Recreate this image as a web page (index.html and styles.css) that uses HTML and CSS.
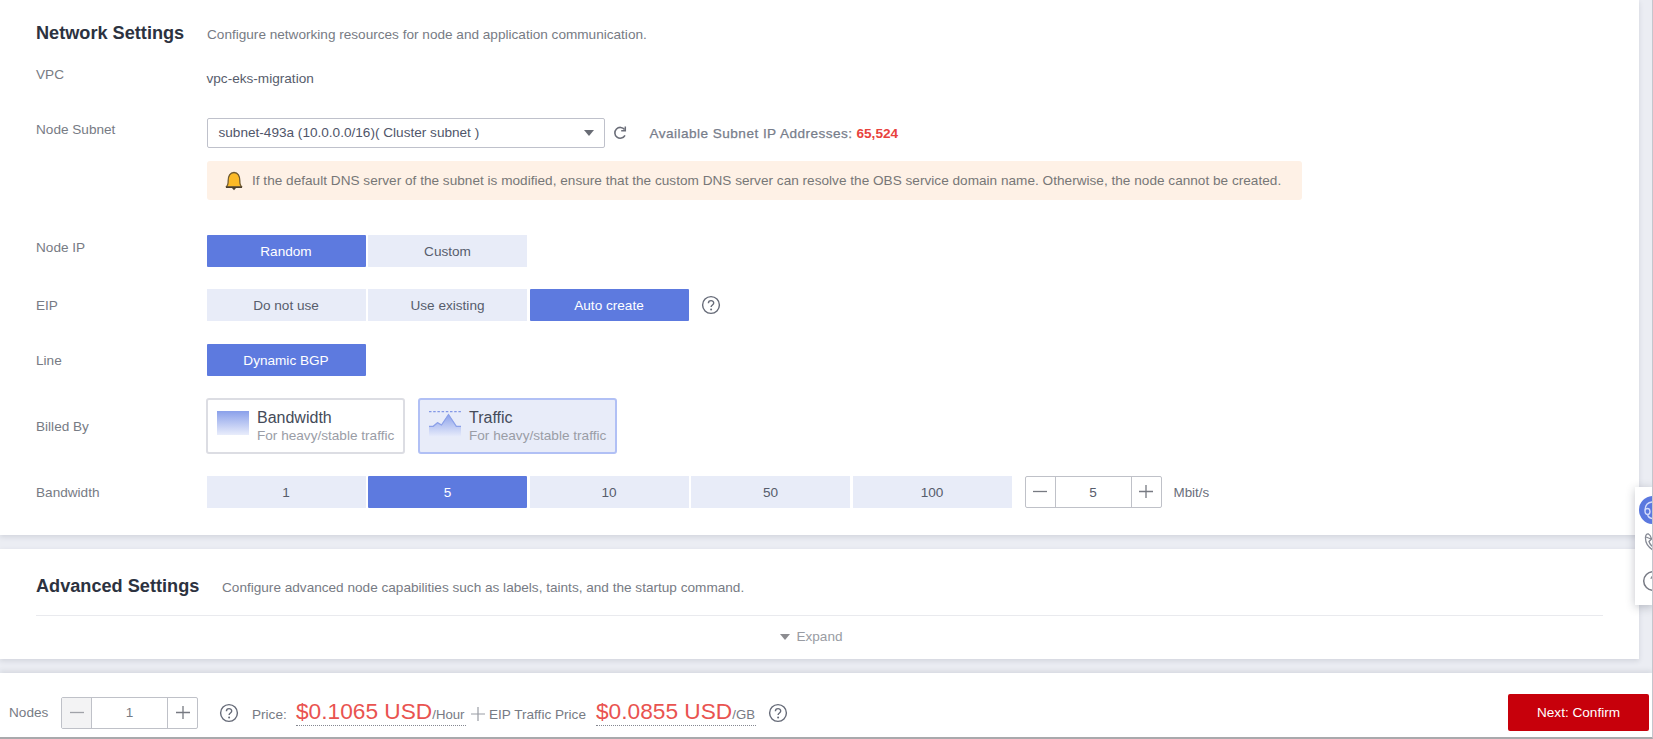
FILE: index.html
```html
<!DOCTYPE html>
<html lang="en">
<head>
<meta charset="utf-8">
<title>Node Settings</title>
<link rel="stylesheet" href="styles.css">
</head>
<body>
<svg class="defs" width="0" height="0">
  <defs>
    <linearGradient id="fade" x1="0" y1="0" x2="0" y2="1">
      <stop offset="0" stop-color="#8aa0ea"/><stop offset="1" stop-color="#e9edfb"/>
    </linearGradient>
    <symbol id="help" viewBox="0 0 20 20">
      <circle cx="10" cy="10" r="8.4" fill="none" stroke="currentColor" stroke-width="1.4"/>
      <path d="M7.4 8.2C7.4 4.7 12.700 4.800 12.700 8c0 1.900-2.600 2-2.600 4.100" fill="none" stroke="currentColor" stroke-width="1.4"/>
      <circle cx="10.1" cy="14.4" r="1" fill="currentColor"/>
    </symbol>
  </defs>
</svg>
<main class="page">
  <section class="panel network">
    <header class="head"><h2 class="title t-net">Network Settings</h2><p class="desc">Configure networking resources for node and application communication.</p></header>
    <div class="row r-vpc"><span class="label">VPC</span><span class="value">vpc-eks-migration</span></div>
    <div class="row r-subnet"><span class="label">Node Subnet</span>
      <div class="select"><span class="select-text">subnet-493a (10.0.0.0/16)( Cluster subnet )</span><i class="caret"></i></div>
      <svg class="refresh" width="16" height="16" viewBox="0 0 16 16"><path d="M12.600 4.600A5.400 5.400 0 1 0 13 10.400" fill="none" stroke="#6a6d78" stroke-width="1.600"/><path d="M13.300 1.500v4.200H9.200" fill="none" stroke="#6a6d78" stroke-width="1.500"/></svg>
      <span class="avail">Available Subnet IP Addresses:</span><b class="count">65,524</b>
    </div>
    <div class="alert">
      <svg class="bell" width="18" height="20" viewBox="0 0 18 20"><path d="M7 17h4l-2 2.2z" fill="#4b4030"/><path d="M1.200 15.800c1.800-1 2-3.200 2-6.200C3.200 5 5 1.500 9 1.500s5.800 3.500 5.800 8.100c0 3 .2 5.200 2 6.200z" fill="#fcba28" stroke="#705a30" stroke-width="1.300" stroke-linejoin="round"/><path d="M1 16.300h16" stroke="#4b4030" stroke-width="1.400"/></svg>
      <span class="alert-text">If the default DNS server of the subnet is modified, ensure that the custom DNS server can resolve the OBS service domain name. Otherwise, the node cannot be created.</span>
    </div>
    <div class="row r-ip"><span class="label">Node IP</span><div class="segs"><span class="seg on">Random</span><span class="seg">Custom</span></div></div>
    <div class="row r-eip"><span class="label">EIP</span><div class="segs"><span class="seg">Do not use</span><span class="seg">Use existing</span><span class="seg on">Auto create</span></div><svg class="help h-eip"><use href="#help"/></svg></div>
    <div class="row r-line"><span class="label">Line</span><div class="segs"><span class="seg on">Dynamic BGP</span></div></div>
    <div class="row r-bill"><span class="label">Billed By</span>
      <div class="card"><svg width="32" height="24" viewBox="0 0 32 24"><path d="M0 0h32v24H0z" fill="url(#fade)"/></svg><div class="card-text"><span class="card-name">Bandwidth</span><span class="card-sub">For heavy/stable traffic</span></div></div>
      <div class="card chosen"><svg width="32" height="26" viewBox="0 0 32 26"><path d="M0 .5h32" stroke="#8398e6" stroke-width="1.300" stroke-dasharray="2.500 1.700"/><path d="M0 15h4l4.500-4 4 2.500L19.500 3l8 12H32v11H0z" fill="url(#fade)"/><path d="M0 15.300h4.200l4.300-3.600 4 2.300L19.500 3.500l7.800 11.800H32" fill="none" stroke="#8ca1e9" stroke-width="1.200"/></svg><div class="card-text"><span class="card-name">Traffic</span><span class="card-sub">For heavy/stable traffic</span></div></div>
    </div>
    <div class="row r-band"><span class="label">Bandwidth</span>
      <div class="segs"><span class="seg">1</span><span class="seg on">5</span><span class="seg">10</span><span class="seg">50</span><span class="seg">100</span></div>
      <div class="stepper s-band"><span class="step"><svg width="14" height="14"><path d="M0 6.500h14" stroke="#777a82" stroke-width="1.300"/></svg></span><span class="num">5</span><span class="step"><svg width="14" height="14"><path d="M0 6.500h14M7 0v13" stroke="#777a82" stroke-width="1.300"/></svg></span></div>
      <span class="unit">Mbit/s</span>
    </div>
  </section>
  <section class="panel advanced">
    <header class="head"><h2 class="title t-adv">Advanced Settings</h2><p class="desc">Configure advanced node capabilities such as labels, taints, and the startup command.</p></header>
    <div class="expand"><i class="caret"></i><span>Expand</span></div>
  </section>
  <footer class="bar">
    <span class="nodes">Nodes</span>
    <div class="stepper s-node"><span class="step off"><svg width="14" height="14"><path d="M0 6.500h14" stroke="#a0a2a8" stroke-width="1.300"/></svg></span><span class="num">1</span><span class="step"><svg width="14" height="14"><path d="M0 6.500h14M7 0v13" stroke="#777a82" stroke-width="1.300"/></svg></span></div>
    <svg class="help h-node"><use href="#help"/></svg>
    <div class="prices"><span class="price-label">Price:</span><span class="price p-hour"><span class="amount">$0.1065 USD</span><span class="per">/Hour</span></span><svg class="plus" width="14" height="14"><path d="M0 7h14M7 0v14" stroke="#9a9da5" stroke-width="1.200"/></svg><span class="eip-label">EIP Traffic Price</span><span class="price p-gb"><span class="amount">$0.0855 USD</span><span class="per">/GB</span></span></div>
    <svg class="help h-price"><use href="#help"/></svg>
    <button class="next">Next: Confirm</button>
  </footer>
  <aside class="side">
    <svg width="18" height="118" viewBox="0 0 18 118"><circle cx="18" cy="23" r="14" fill="#5b78df"/><path d="M18 15q-7.500 0-8 8-.2 4.500 2.500 4.500 2.500 0 2.500-3t-2.500-3q-2 0-2.500 2M12.500 27.500q1 4 5.500 4" fill="none" stroke="#d5dcfa" stroke-width="1.400"/><path d="M18 63q-8-5-7.500-13 .5-3.500 3-3 2 1 3 5l-2.500 2.500Q15 58 18 60M11 50l5 2" fill="none" stroke="#858994" stroke-width="1.300"/><circle cx="18" cy="94" r="9.300" fill="none" stroke="#777a84" stroke-width="1.500"/><path d="M16 92q0-3 2-3" fill="none" stroke="#777a84"/></svg>
  </aside>
</main>
</body>
</html>
```
FILE: styles.css
```css
* { box-sizing: border-box; }
body { margin: 0; font-family: "Liberation Sans", Arial, sans-serif; font-size: 13.6px; color: #575d6c; }
.defs { position: absolute; }
.page { position: relative; width: 1653px; height: 739px; overflow: hidden; background: #ebedf3; border-right: 1px solid #c4c6cd; border-bottom: 2px solid #a9a9ac; display: flex; flex-direction: column; gap: 14px; }
.panel { width: 1639px; background: #fff; box-shadow: 0 2px 5px rgba(60, 65, 85, .14); padding-left: 36px; flex: none; }
.network { height: 535px; padding-top: 17px; }
.advanced { height: 110px; padding: 21px 36px 0; }
.head { display: flex; height: 32px; align-items: center; white-space: nowrap; }
.title { margin: 0; font-size: 18.150px; line-height: 32px; color: #2c3240; }
.t-net { width: 171px; }
.t-adv { width: 186px; }
.desc { margin: 3px 0 0; color: #777b84; }
.row { display: flex; align-items: center; white-space: nowrap; }
.label { width: 170.500px; flex: none; color: #777b84; position: relative; }
.value { color: #575d6c; position: relative; top: -1px; }
.r-vpc { height: 30px; margin-top: 15px; }
.r-vpc .label { top: -5px; }
.r-subnet { height: 30px; margin-top: 24px; }
.r-subnet .label { top: -4px; }
.select { width: 398px; height: 30px; border: 1px solid #bfc1cb; border-radius: 2px; display: flex; align-items: center; justify-content: space-between; padding: 0 10px 1px 11px; color: #50566a; }
.caret { width: 0; height: 0; border: 5px solid transparent; border-top: 6px solid #696c75; border-bottom: 0; }
.refresh { margin-left: 7px; }
.avail { margin-left: 22px; width: 207px; color: #777d8b; letter-spacing: .46px; -webkit-text-stroke: .25px #777d8b; }
.count { color: #e8423d; }
.alert { margin: 13px 0 0 170.500px; width: 1095px; height: 39px; background: #fef1e6; border-radius: 3px; display: flex; align-items: center; padding-left: 18.500px; white-space: nowrap; color: #777; }
.alert-text { margin-left: 9px; letter-spacing: .014px; }
.r-ip, .r-eip, .r-line, .r-band { height: 32px; }
.r-ip { margin-top: 35px; }
.r-ip .label { top: -4px; }
.r-eip { margin-top: 22px; }
.r-line { margin-top: 23px; }
.r-bill { height: 56px; margin-top: 22px; }
.r-bill .label { width: 170px; }
.r-band { margin-top: 22px; }
.segs { display: flex; gap: 2.500px; }
.seg { width: 159px; height: 32px; background: #e8ecf8; display: flex; align-items: center; justify-content: center; color: #575d6c; }
.seg.on { background: #5d7adf; color: #fff; border-radius: 1px; }
.help { width: 20px; height: 20px; color: #666b78; flex: none; }
.h-eip { margin-left: 12px; }
.card { width: 199px; height: 56px; border: 2px solid #dcdde3; border-radius: 3px; display: flex; padding: 11px 0 0 9px; margin-right: 13px; flex: none; }
.card.chosen { background: #e8ecf9; border-color: #b1c0f5; }
.card svg { flex: none; }
.card-text { display: flex; flex-direction: column; margin-left: 8px; }
.card-name { font-size: 16px; line-height: 18px; color: #454b59; margin-top: -2px; }
.card-sub { line-height: 18px; color: #9a9da6; }
.stepper { width: 137px; height: 32px; border: 1px solid #bfc1c8; border-radius: 2px; display: flex; }
.s-band { margin-left: 13px; }
.step { width: 29px; display: flex; align-items: center; justify-content: center; }
.step.off { background: #f3f3f4; }
.num { flex: 1; border: solid #bfc1c8; border-width: 0 1px; display: flex; align-items: center; justify-content: center; }
.unit { margin-left: 12px; color: #696e7b; font-size: 13.400px; }
.expand { border-top: 1px solid #e9eaee; margin-top: 13px; height: 42px; display: flex; justify-content: center; align-items: center; color: #999ca3; padding-right: 16px; }
.expand .caret { border-top-color: #8c8c90; margin-right: 6px; }
.bar { height: 66px; background: #fff; display: flex; align-items: center; padding: 13px 3px 0 9px; flex: none; white-space: nowrap; box-shadow: 0 -2px 5px rgba(60, 65, 85, .12); color: #777b84; }
.nodes { width: 52px; }
.h-node { margin-left: 21px; }
.prices { display: flex; align-items: baseline; width: 516px; margin-left: 13px; position: relative; top: 1px; }
.price-label { width: 44px; }
.price { border-bottom: 1px dotted #858891; display: flex; align-items: baseline; line-height: 21px; }
.amount { font-size: 22.700px; color: #e95350; }
.per { font-size: 13.200px; }
.p-hour { width: 170px; }
.p-gb { width: 160px; }
.plus { margin: 0 4px 0 5px; position: relative; top: 2px; }
.eip-label { width: 107px; }
.next { margin-left: auto; width: 141px; height: 37px; border: 0; border-radius: 2px; background: #c7000b; color: #fff; font: 13.600px "Liberation Sans", Arial, sans-serif; }
.side { position: absolute; left: 1635px; top: 487px; width: 18px; height: 118px; background: #fff; box-shadow: 0 2px 10px rgba(40, 45, 65, .28); }
.side svg { display: block; }
```
